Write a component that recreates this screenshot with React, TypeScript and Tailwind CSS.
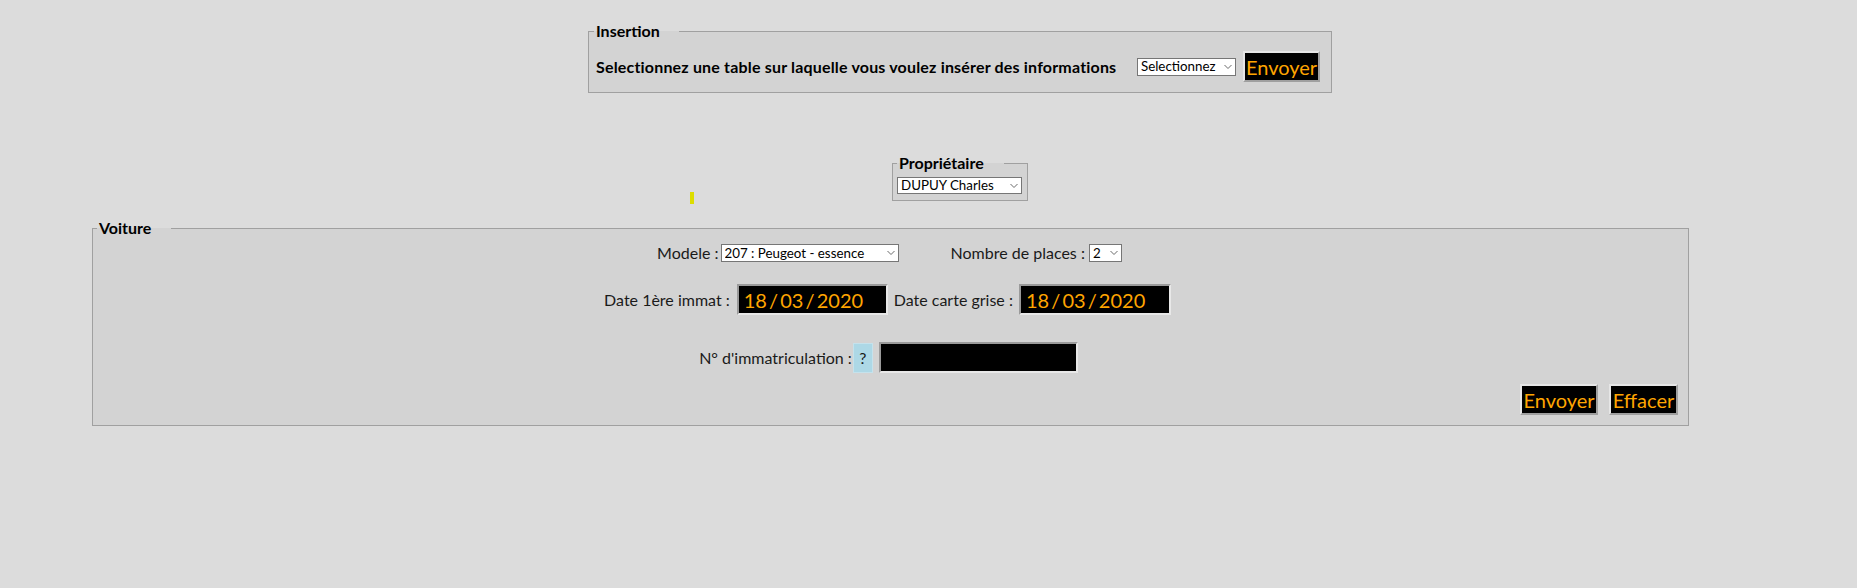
import React from "react";

const Chevron = () => (
  <svg
    className="pointer-events-none absolute right-[4px] top-1/2 -translate-y-1/2"
    width="8"
    height="5"
    viewBox="0 0 8 5"
    fill="none"
  >
    <path d="M0.5 0.5 L4 4 L7.5 0.5" stroke="#6b6b6b" strokeWidth="1" />
  </svg>
);

const Select = ({ value, className }: { value: string; className: string }) => (
  <div className={`relative flex shrink-0 ${className}`}>
    <select
      defaultValue={value}
      className="h-full w-full appearance-none border border-[#767676] bg-white pl-[3px] text-[13.33px] leading-[15px] text-black outline-none"
    >
      <option>{value}</option>
    </select>
    <Chevron />
  </div>
);

const Btn = ({ label, className }: { label: string; className: string }) => (
  <button
    className={`h-[31px] shrink-0 border-2 border-t-[#e6e6e6] border-l-[#e6e6e6] border-r-[#9f9f9f] border-b-[#9f9f9f] bg-black text-[20px] leading-none text-[#ffa500] ${className}`}
  >
    {label}
  </button>
);

const DateInput = ({ className }: { className: string }) => (
  <input
    readOnly
    value="18 / 03 / 2020"
    className={`h-[31px] shrink-0 border-2 border-t-[#9a9a9a] border-l-[#9a9a9a] border-r-[#e8e8e8] border-b-[#e8e8e8] bg-black pl-[5px] text-[20px] text-[#ffa500] outline-none [word-spacing:-3px] ${className}`}
  />
);

export default function App() {
  return (
    <div className="h-[588px] w-full overflow-hidden bg-[#dcdcdc] font-['Lato',sans-serif] text-[16px] text-black">
      {/* Insertion */}
      <fieldset className="ml-[588px] mt-[22px] w-[744px] border border-[#a0a0a0] bg-[#d3d3d3] pb-[10px] pl-[5px] pr-[11px]">
        <legend className="pl-[2px] pr-[19px] text-[16px] font-bold leading-[18px]">Insertion</legend>
        <div className="mt-[11px] flex items-center pl-[2px]">
          <span className="font-bold leading-[20px] tracking-[0.18px]">
            Selectionnez une table sur laquelle vous voulez insérer des informations
          </span>
          <Select value="Selectionnez" className="ml-auto h-[18px] w-[99px]" />
          <Btn label="Envoyer" className="ml-[7px] w-[77px]" />
        </div>
      </fieldset>

      {/* Propriétaire */}
      <div className="mt-[61px] flex items-start pl-[690px]">
        <div className="mb-[-3px] mt-[38px] h-[12px] w-[4px] bg-[#dddd00]" />
        <fieldset className="ml-[198px] w-[136px] border border-[#a0a0a0] bg-[#d3d3d3] px-[4px] pb-[6px]">
          <legend className="pl-[2px] pr-[20px] text-[16px] font-bold leading-[18px]">Propriétaire</legend>
          <Select value="DUPUY Charles" className="mt-[5px] h-[17px] w-[125px]" />
        </fieldset>
      </div>

      {/* Voiture */}
      <fieldset className="ml-[92px] mt-[18px] w-[1597px] border border-[#a0a0a0] bg-[#d3d3d3] pb-[10px] pl-[4px] pr-[10px]">
        <legend className="pl-[2px] pr-[20px] text-[16px] font-bold leading-[18px]">Voiture</legend>

        <div className="mt-[7px] flex h-[18px] items-center justify-center pl-[4px]">
          <span className="leading-[18px] text-[#1a1a1a]">Modele :</span>
          <Select value="207 : Peugeot - essence" className="ml-[2px] h-[18px] w-[178px]" />
          <span className="ml-[52px] leading-[18px] text-[#1a1a1a]">Nombre de places :</span>
          <Select value="2" className="ml-[4px] h-[18px] w-[33px]" />
        </div>

        <div className="mt-[22px] flex h-[31px] items-center justify-center">
          <span className="text-[#1a1a1a]">Date 1ère immat :</span>
          <DateInput className="ml-[7px] w-[151px]" />
          <span className="ml-[6px] text-[#1a1a1a]">Date carte grise :</span>
          <DateInput className="ml-[6px] w-[152px]" />
        </div>

        <div className="mt-[27px] flex h-[31px] items-center justify-center pl-[2px]">
          <span className="text-[#1a1a1a]">N° d'immatriculation :</span>
          <span className="ml-[1px] flex h-[30px] w-[20px] items-center justify-center border border-[#c5e2ec] bg-[#add8e6] text-[16px] text-[#1a1a1a]">
            ?
          </span>
          <input
            readOnly
            value=""
            className="ml-[6px] h-[31px] w-[199px] border-2 border-t-[#9a9a9a] border-l-[#9a9a9a] border-r-[#e8e8e8] border-b-[#e8e8e8] bg-black outline-none"
          />
        </div>

        <div className="mt-[11px] flex justify-end">
          <Btn label="Envoyer" className="w-[78px]" />
          <Btn label="Effacer" className="ml-[11px] w-[69px]" />
        </div>
      </fieldset>
    </div>
  );
}
